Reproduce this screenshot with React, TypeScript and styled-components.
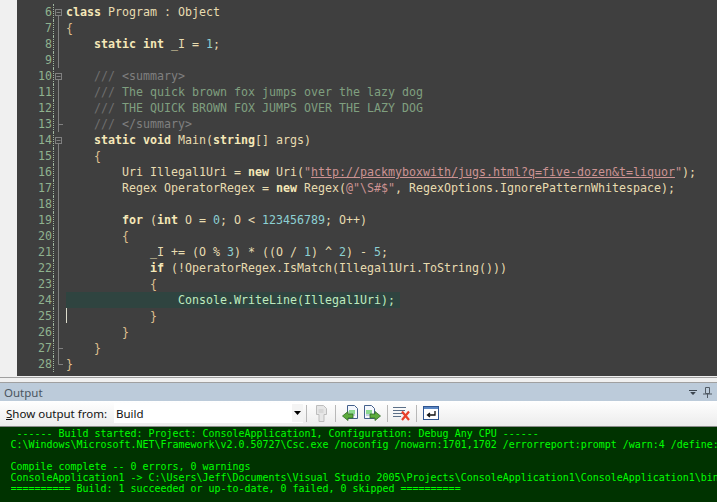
import React from "react";
import styled, { createGlobalStyle } from "styled-components";

const Global = createGlobalStyle`
  html, body { margin: 0; padding: 0; width: 717px; height: 502px; overflow: hidden; background: #f0f0f0; }
  #root { width: 717px; height: 502px; }
`;

const Page = styled.div`
  width: 717px;
  height: 502px;
  display: flex;
  flex-direction: column;
  overflow: hidden;
`;

const EditorFrame = styled.div`
  height: 376px;
  display: flex;
  background: #f0f0f0;
  flex: none;
`;

const EditorSurface = styled.div`
  margin-left: 17px;
  flex: 1;
  background: #3f3f3f;
  display: flex;
  flex-direction: column;
  padding-top: 4px;
  overflow: hidden;
  font-family: "DejaVu Sans Mono", "Liberation Mono", monospace;
  font-size: 11.63px;
  color: #dcdccc;
`;

const Row = styled.div`
  display: flex;
  height: 16px;
  line-height: 16px;
  flex: none;
`;

const LineNo = styled.div`
  width: 37px;
  padding-right: 1px;
  box-sizing: border-box;
  text-align: right;
  color: #8fb28f;
  border-right: 1px dotted #9fb59f;
  flex: none;
`;

const FoldCell = styled.div`
  width: 12px;
  flex: none;
  display: block;
`;

const Code = styled.div<{ $level: number; $active?: boolean }>`
  flex: none;
  width: ${({ $active }) => ($active ? "334px" : "640px")};
  padding-left: ${({ $level }) => $level * 28}px;
  box-sizing: border-box;
  white-space: pre;
  background: ${({ $active }) => ($active ? "#2f4440" : "transparent")};
`;

const Caret = styled.span`
  display: inline-block;
  width: 1px;
  height: 15px;
  background: #dcdccc;
  vertical-align: top;
  margin-right: -1px;
`;

const Keyword = styled.span`
  color: #f5e8b8;
  font-weight: 700;
`;
const Plain = styled.span`
  color: #e8dcb0;
`;
const Number_ = styled.span`
  color: #8cd0d3;
`;
const DocSlash = styled.span`
  color: #6f6f6f;
`;
const DocTag = styled.span`
  color: #7f7f7f;
`;
const Doc = styled.span`
  color: #7f9f7f;
`;
const Str = styled.span`
  color: #cc9393;
`;
const Url = styled.span`
  color: #cc9393;
  text-decoration: underline;
`;
const Brace = styled.span`
  color: #dfc08f;
`;
const Teal = styled.span`
  color: #bfebbf;
`;

const Splitter = styled.div`
  height: 6px;
  margin-top: 1px;
  flex: none;
  box-sizing: border-box;
  background: #f0f0f0;
  border-top: 1px solid #a0a0a0;
  border-bottom: 1px solid #a0a0a0;
`;

const TitleBar = styled.div`
  height: 18px;
  flex: none;
  background: #bccbda;
  display: flex;
  align-items: center;
  justify-content: space-between;
  padding: 0 5px 0 4px;
  font-family: "Noto Sans", "Open Sans", sans-serif;
  font-size: 11.5px;
  color: #4a5560;
`;

const TitleTools = styled.div`
  display: flex;
  align-items: center;
  gap: 6px;
`;

const Toolbar = styled.div`
  height: 26px;
  flex: none;
  box-sizing: border-box;
  background: linear-gradient(#ffffff, #ececec);
  display: flex;
  align-items: center;
  padding: 0 0 1px 6px;
  font-family: "Noto Sans", "Open Sans", sans-serif;
  font-size: 11.5px;
  color: #111;
  border-bottom: 1px solid #8a8a8a;
`;

const ToolbarLabel = styled.div`
  width: 108px;
  flex: none;
  white-space: pre;
  u { text-underline-offset: 1px; }
`;

const Select = styled.div`
  width: 189px;
  height: 20px;
  flex: none;
  background: #fff;
  display: flex;
  align-items: center;
  justify-content: space-between;
  padding-left: 2px;
  box-sizing: border-box;
`;

const SelectButton = styled.div`
  width: 11px;
  height: 18px;
  background: #f4f4f4;
  display: flex;
  align-items: center;
  justify-content: center;
`;

const Sep = styled.div`
  width: 1px;
  height: 17px;
  background: #b8b8b8;
  flex: none;
  margin: 0 3px;
`;

const ToolIcon = styled.div<{ $extra?: number }>`
  width: ${({ $extra }) => 22 + ($extra ?? 0)}px;
  height: 20px;
  display: flex;
  align-items: center;
  justify-content: center;
  flex: none;
`;

const Output = styled.div`
  flex: 1;
  background: #003300;
  color: #00ff00;
  font-family: "DejaVu Sans Mono", "Liberation Mono", monospace;
  font-size: 9.97px;
  line-height: 11px;
  padding: 1px 0 0 10.5px;
  overflow: hidden;
`;

const OutLine = styled.div`
  height: 11px;
  white-space: pre;
  width: 706px;
  overflow: hidden;
`;

type FoldKind = "box" | "line" | "tick" | "end" | "none";

const Fold = ({ kind }: { kind: FoldKind }) => (
  <FoldCell>
    <svg width="12" height="16" viewBox="0 0 12 16" style={{ display: "block" }}>
      {kind === "box" && (
        <g fill="none" stroke="#808080">
          <rect x="1.5" y="5.5" width="6" height="6" />
          <path d="M2.5 8.5h4M4.5 11.5V16" />
        </g>
      )}
      {kind === "line" && <path d="M4.5 0v16" stroke="#808080" />}
      {kind === "tick" && <path d="M4.5 0v16M5 8.5h4" stroke="#808080" fill="none" />}
      {kind === "end" && <path d="M4.5 0v8.5H9" stroke="#808080" fill="none" />}
    </svg>
  </FoldCell>
);

const lines: { n: number; fold: FoldKind; level: number; active?: boolean; caret?: boolean; body?: React.ReactNode }[] = [
  { n: 6, fold: "box", level: 0, body: <><Keyword>class</Keyword><Plain> Program : Object</Plain></> },
  { n: 7, fold: "line", level: 0, body: <Brace>{"{"}</Brace> },
  { n: 8, fold: "line", level: 1, body: <><Keyword>static int</Keyword><Plain> _I = </Plain><Number_>1</Number_><Plain>;</Plain></> },
  { n: 9, fold: "line", level: 0 },
  { n: 10, fold: "box", level: 1, body: <><DocSlash>/// </DocSlash><DocTag>&lt;summary&gt;</DocTag></> },
  { n: 11, fold: "line", level: 1, body: <><DocSlash>/// </DocSlash><Doc>The quick brown fox jumps over the lazy dog</Doc></> },
  { n: 12, fold: "line", level: 1, body: <><DocSlash>/// </DocSlash><Doc>THE QUICK BROWN FOX JUMPS OVER THE LAZY DOG</Doc></> },
  { n: 13, fold: "tick", level: 1, body: <><DocSlash>/// </DocSlash><DocTag>&lt;/summary&gt;</DocTag></> },
  { n: 14, fold: "box", level: 1, body: <><Keyword>static void</Keyword><Plain> Main(</Plain><Keyword>string</Keyword><Plain>[] args)</Plain></> },
  { n: 15, fold: "line", level: 1, body: <Brace>{"{"}</Brace> },
  { n: 16, fold: "line", level: 2, body: <><Plain>Uri Illegal1Uri = </Plain><Keyword>new</Keyword><Plain> Uri(</Plain><Str>"</Str><Url>http://packmyboxwith/jugs.html?q=five-dozen&amp;t=liquor</Url><Str>"</Str><Plain>);</Plain></> },
  { n: 17, fold: "line", level: 2, body: <><Plain>Regex OperatorRegex = </Plain><Keyword>new</Keyword><Plain> Regex(</Plain><Str>@"\S#$"</Str><Plain>, RegexOptions.IgnorePatternWhitespace);</Plain></> },
  { n: 18, fold: "line", level: 0 },
  { n: 19, fold: "line", level: 2, body: <><Keyword>for</Keyword><Plain> (</Plain><Keyword>int</Keyword><Plain> O = </Plain><Number_>0</Number_><Plain>; O &lt; </Plain><Number_>123456789</Number_><Plain>; O++)</Plain></> },
  { n: 20, fold: "line", level: 2, body: <Brace>{"{"}</Brace> },
  { n: 21, fold: "line", level: 3, body: <><Plain>_I += (O % </Plain><Number_>3</Number_><Plain>) * ((O / </Plain><Number_>1</Number_><Plain>) ^ </Plain><Number_>2</Number_><Plain>) - </Plain><Number_>5</Number_><Plain>;</Plain></> },
  { n: 22, fold: "line", level: 3, body: <><Keyword>if</Keyword><Plain> (!OperatorRegex.IsMatch(Illegal1Uri.ToString()))</Plain></> },
  { n: 23, fold: "line", level: 3, body: <Brace>{"{"}</Brace> },
  { n: 24, fold: "line", level: 4, active: true, body: <Teal>Console.WriteLine(Illegal1Uri);</Teal> },
  { n: 25, fold: "line", level: 0, caret: true, body: <>{"            "}<Brace>{"}"}</Brace></> },
  { n: 26, fold: "line", level: 2, body: <Brace>{"}"}</Brace> },
  { n: 27, fold: "tick", level: 1, body: <Brace>{"}"}</Brace> },
  { n: 28, fold: "end", level: 0, body: <Brace>{"}"}</Brace> },
];

const outputLines = [
  " ------ Build started: Project: ConsoleApplication1, Configuration: Debug Any CPU ------",
  "C:\\Windows\\Microsoft.NET\\Framework\\v2.0.50727\\Csc.exe /noconfig /nowarn:1701,1702 /errorreport:prompt /warn:4 /define:",
  "",
  "Compile complete -- 0 errors, 0 warnings",
  "ConsoleApplication1 -> C:\\Users\\Jeff\\Documents\\Visual Studio 2005\\Projects\\ConsoleApplication1\\ConsoleApplication1\\bin",
  "========== Build: 1 succeeded or up-to-date, 0 failed, 0 skipped ==========",
];

const PageIcon = ({ dim }: { dim?: boolean }) => (
  <g>
    <path d="M3.5 0.5h7l3 3v10h-10z" fill={dim ? "#e4e4e4" : "#f4f7fc"} stroke={dim ? "#b4b4b4" : "#44608c"} />
    <path d="M5 6h6M5 8h6" stroke={dim ? "#c4c4c4" : "#22bb22"} />
    <path d="M5 10h6" stroke={dim ? "#c4c4c4" : "#8fa6c4"} />
  </g>
);

export default function App() {
  return (
    <Page>
      <Global />
      <EditorFrame>
        <EditorSurface>
          {lines.map((l) => (
            <Row key={l.n}>
              <LineNo>{l.n}</LineNo>
              <Fold kind={l.fold} />
              <Code $level={l.level} $active={l.active}>
                {l.caret && <Caret />}
                {l.body}
              </Code>
            </Row>
          ))}
        </EditorSurface>
      </EditorFrame>
      <Splitter />
      <TitleBar>
        <span>Output</span>
        <TitleTools>
          <svg width="8" height="5" viewBox="0 0 8 5">
            <path d="M0 0h8v1H0zM1.5 2h5v.5L4 5 1.5 2.5z" fill="#3c4650" />
          </svg>
          <svg width="9" height="11" viewBox="0 0 9 11">
            <path d="M2.5 .5h4v6h-4zM0 7h9M4.5 7v4" stroke="#505a64" fill="none" />
          </svg>
        </TitleTools>
      </TitleBar>
      <Toolbar>
        <ToolbarLabel>
          <u>S</u>how output from:
        </ToolbarLabel>
        <Select>
          <span>Build</span>
          <SelectButton>
            <svg width="7" height="4" viewBox="0 0 7 4">
              <path d="M0 0h7L3.5 4z" fill="#000" />
            </svg>
          </SelectButton>
        </Select>
        <Sep />
        <ToolIcon>
          <svg width="13" height="17" viewBox="0 0 13 17">
            <path d="M1.5 0.5h7l3 3v6h-2.5v7h-5v-7h-2.5z" fill="#e6e6e6" stroke="#bdbdbd" />
            <path d="M3.5 5h5M3.5 7h5" stroke="#c8c8c8" />
          </svg>
        </ToolIcon>
        <Sep />
        <ToolIcon>
          <svg width="17" height="16" viewBox="0 0 17 16">
            <g transform="translate(2 0)"><PageIcon /></g>
            <path d="M0.5 11 6 6.5v2.500h5v4H6v2.500z" fill="#5cab3c" stroke="#2f6b25" strokeWidth="0.8" />
          </svg>
        </ToolIcon>
        <ToolIcon $extra={1}>
          <svg width="17" height="16" viewBox="0 0 17 16">
            <g transform="translate(-3 0)"><PageIcon /></g>
            <path d="M16.500 11 11 6.500v2.500H6v4h5v2.500z" fill="#5cab3c" stroke="#2f6b25" strokeWidth="0.8" />
          </svg>
        </ToolIcon>
        <Sep />
        <ToolIcon>
          <svg width="18" height="15" viewBox="0 0 18 15">
            <path d="M0 1.500h13M0 4.500h12M0 7.500h10M0 10.500h8" stroke="#5c7088" />
            <path d="M9 5.500l7 8.500M16 5.500l-7 8.500" stroke="#e8402a" strokeWidth="2.200" />
          </svg>
        </ToolIcon>
        <Sep />
        <ToolIcon>
          <svg width="16" height="14" viewBox="0 0 16 14">
            <rect x="0.5" y="0.5" width="15" height="13" fill="#fff" stroke="#2f5590" />
            <rect x="1" y="1" width="14" height="2" fill="#5a86c4" />
            <path d="M12 5v4H5M7 7 4.500 9 7 11" stroke="#111" fill="none" strokeWidth="1.300" />
          </svg>
        </ToolIcon>
      </Toolbar>
      <Output>
        {outputLines.map((t, i) => (
          <OutLine key={i}>{t}</OutLine>
        ))}
      </Output>
    </Page>
  );
}
